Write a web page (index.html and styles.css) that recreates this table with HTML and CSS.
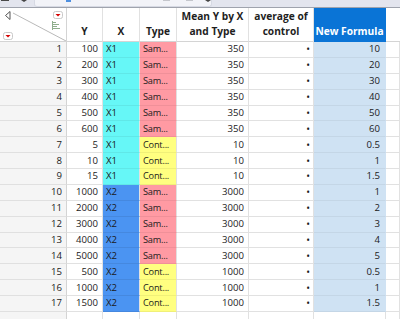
FILE: index.html
```html
<!DOCTYPE html>
<html>
<head>
<meta charset="utf-8">
<link rel="stylesheet" href="styles.css">
</head>
<body>
<div class="toolbar">
  <span class="tb-dash"></span>
  <span class="tb-caret"></span>
  <div class="tb-box">
    <span class="tb-blue"></span>
    <span class="tb-gray first"></span>
    <span class="tb-gray"></span>
    <span class="tb-caret tb-caret2"></span>
  </div>
</div>
<div class="table">
  <div class="row head">
    <div class="cell corner">
      <svg width="66" height="33" viewBox="0 0 66 33">
        <line x1="13" y1="5" x2="66" y2="33" stroke="#b9b9b9" stroke-width="1"/>
        <path d="M10 3.5 L5.5 7.5 L10 11.5 Z" fill="none" stroke="#555" stroke-width="1"/>
        <rect x="53.5" y="3.5" width="9" height="7" rx="2" fill="#fff" stroke="#c9c9c9"/>
        <path d="M55.5 6 L60.5 6 L58 8.5 Z" fill="#d40000"/>
        <rect x="3.5" y="24.5" width="9" height="7" rx="2" fill="#fff" stroke="#c9c9c9"/>
        <path d="M5.5 27 L10.5 27 L8 29.5 Z" fill="#d40000"/>
        <g stroke="#8fae8c" stroke-width="1">
          <line x1="52" y1="14.5" x2="56" y2="14.5"/>
          <line x1="52" y1="16.5" x2="59" y2="16.5"/>
          <line x1="52" y1="18.5" x2="57" y2="18.5"/>
          <line x1="52" y1="20.5" x2="60" y2="20.5"/>
        </g>
        <line x1="52.5" y1="13" x2="52.5" y2="22" stroke="#8fae8c"/>
      </svg>
    </div>
    <div class="cell h">Y</div>
    <div class="cell h">X</div>
    <div class="cell h">Type</div>
    <div class="cell h">Mean Y by X<br>and Type</div>
    <div class="cell h">average of<br>control</div>
    <div class="cell h nfh">New Formula</div>
    <div class="cell h blank"></div>
  </div>
</div>
<div class="table body">
  <div class="row"><div class="cell rn">1</div><div class="cell num">100</div><div class="cell x1">X1</div><div class="cell sam">Sam...</div><div class="cell num">350</div><div class="cell dot">•</div><div class="cell num nf">10</div><div class="cell"></div></div>
  <div class="row"><div class="cell rn">2</div><div class="cell num">200</div><div class="cell x1">X1</div><div class="cell sam">Sam...</div><div class="cell num">350</div><div class="cell dot">•</div><div class="cell num nf">20</div><div class="cell"></div></div>
  <div class="row"><div class="cell rn">3</div><div class="cell num">300</div><div class="cell x1">X1</div><div class="cell sam">Sam...</div><div class="cell num">350</div><div class="cell dot">•</div><div class="cell num nf">30</div><div class="cell"></div></div>
  <div class="row"><div class="cell rn">4</div><div class="cell num">400</div><div class="cell x1">X1</div><div class="cell sam">Sam...</div><div class="cell num">350</div><div class="cell dot">•</div><div class="cell num nf">40</div><div class="cell"></div></div>
  <div class="row"><div class="cell rn">5</div><div class="cell num">500</div><div class="cell x1">X1</div><div class="cell sam">Sam...</div><div class="cell num">350</div><div class="cell dot">•</div><div class="cell num nf">50</div><div class="cell"></div></div>
  <div class="row"><div class="cell rn">6</div><div class="cell num">600</div><div class="cell x1">X1</div><div class="cell sam">Sam...</div><div class="cell num">350</div><div class="cell dot">•</div><div class="cell num nf">60</div><div class="cell"></div></div>
  <div class="row"><div class="cell rn">7</div><div class="cell num">5</div><div class="cell x1">X1</div><div class="cell con">Cont...</div><div class="cell num">10</div><div class="cell dot">•</div><div class="cell num nf">0.5</div><div class="cell"></div></div>
  <div class="row"><div class="cell rn">8</div><div class="cell num">10</div><div class="cell x1">X1</div><div class="cell con">Cont...</div><div class="cell num">10</div><div class="cell dot">•</div><div class="cell num nf">1</div><div class="cell"></div></div>
  <div class="row"><div class="cell rn">9</div><div class="cell num">15</div><div class="cell x1">X1</div><div class="cell con">Cont...</div><div class="cell num">10</div><div class="cell dot">•</div><div class="cell num nf">1.5</div><div class="cell"></div></div>
  <div class="row"><div class="cell rn">10</div><div class="cell num">1000</div><div class="cell x2">X2</div><div class="cell sam">Sam...</div><div class="cell num">3000</div><div class="cell dot">•</div><div class="cell num nf">1</div><div class="cell"></div></div>
  <div class="row"><div class="cell rn">11</div><div class="cell num">2000</div><div class="cell x2">X2</div><div class="cell sam">Sam...</div><div class="cell num">3000</div><div class="cell dot">•</div><div class="cell num nf">2</div><div class="cell"></div></div>
  <div class="row"><div class="cell rn">12</div><div class="cell num">3000</div><div class="cell x2">X2</div><div class="cell sam">Sam...</div><div class="cell num">3000</div><div class="cell dot">•</div><div class="cell num nf">3</div><div class="cell"></div></div>
  <div class="row"><div class="cell rn">13</div><div class="cell num">4000</div><div class="cell x2">X2</div><div class="cell sam">Sam...</div><div class="cell num">3000</div><div class="cell dot">•</div><div class="cell num nf">4</div><div class="cell"></div></div>
  <div class="row"><div class="cell rn">14</div><div class="cell num">5000</div><div class="cell x2">X2</div><div class="cell sam">Sam...</div><div class="cell num">3000</div><div class="cell dot">•</div><div class="cell num nf">5</div><div class="cell"></div></div>
  <div class="row"><div class="cell rn">15</div><div class="cell num">500</div><div class="cell x2">X2</div><div class="cell con">Cont...</div><div class="cell num">1000</div><div class="cell dot">•</div><div class="cell num nf">0.5</div><div class="cell"></div></div>
  <div class="row"><div class="cell rn">16</div><div class="cell num">1000</div><div class="cell x2">X2</div><div class="cell con">Cont...</div><div class="cell num">1000</div><div class="cell dot">•</div><div class="cell num nf">1</div><div class="cell"></div></div>
  <div class="row"><div class="cell rn">17</div><div class="cell num">1500</div><div class="cell x2">X2</div><div class="cell con">Cont...</div><div class="cell num">1000</div><div class="cell dot">•</div><div class="cell num nf">1.5</div><div class="cell"></div></div>
  <div class="row"><div class="cell rn"></div><div class="cell"></div><div class="cell"></div><div class="cell"></div><div class="cell"></div><div class="cell"></div><div class="cell"></div><div class="cell"></div></div>
</div>
</body>
</html>
```

FILE: styles.css
```css
html, body {
  margin: 0;
  padding: 0;
  background: #ffffff;
  overflow: hidden;
}
body {
  width: 400px;
  height: 319px;
  font-family: "Open Sans", "Noto Sans", sans-serif;
  color: #1b1b1b;
}
.toolbar {
  height: 7px;
  background: #e3e5ee;
  border-bottom: 1px solid #9fa3ad;
  display: flex;
  align-items: flex-start;
  overflow: hidden;
}
.tb-dash {
  width: 8px;
  height: 1px;
  margin: 0 0 0 1px;
  background: #4a4a4a;
}
.tb-caret {
  width: 0;
  height: 0;
  border-left: 3px solid transparent;
  border-right: 3px solid transparent;
  border-top: 2px solid #444;
  margin-left: 12px;
}
.tb-box {
  margin-left: 7px;
  width: 176px;
  height: 6px;
  background: #f2f3f8;
  border: 1px solid #d6d9e3;
  border-top: none;
  border-radius: 0 0 3px 3px;
  display: flex;
  align-items: flex-start;
}
.tb-blue {
  width: 6px;
  height: 2px;
  background: #4d8fe0;
  margin-left: 31px;
}
.tb-gray {
  width: 8px;
  height: 1px;
  background: #c4c6cc;
  margin-left: 16px;
}
.tb-gray.first { margin-left: 92px; }
.tb-caret2 {
  margin-left: 12px;
}
.row {
  display: grid;
  grid-template-columns: 67px 36px 37px 37px 72px 65px 72px 14px;
  height: 15.875px;
}
.row.head {
  height: 34px;
}
.cell {
  box-sizing: border-box;
  border-right: 1px solid #e1e1e1;
  border-bottom: 1px solid #e1e1e1;
  font-size: 9.6px;
  line-height: 14px;
  display: flex;
  align-items: center;
  padding: 0 3px;
  white-space: nowrap;
  overflow: hidden;
}
.head .cell {
  border-bottom-color: #d4d4d4;
}
.cell.h {
  font-weight: 700;
  font-size: 10.2px;
  line-height: 15px;
  align-items: flex-end;
  justify-content: center;
  text-align: center;
  padding: 0 0 2px 0;
  color: #1e1e1e;
}
.cell.corner {
  padding: 0;
  align-items: flex-start;
  border-right-color: #d4d4d4;
}
.cell.corner svg {
  display: block;
}
.cell.nfh {
  background: #0a74d6;
  color: #ffffff;
  border-right-color: #0a74d6;
  border-bottom-color: #0a74d6;
}
.cell.blank {
  border-right: none;
}
.cell.rn {
  background: #f5f5f5;
  justify-content: flex-end;
  padding-right: 4px;
  border-right-color: #d4d4d4;
  border-bottom-color: #e0e0e0;
}
.cell.num {
  justify-content: flex-end;
  padding-right: 4px;
}
.cell.dot {
  justify-content: flex-end;
  padding-right: 3px;
  font-size: 10px;
}
.cell.nf {
  background: #cfe2f3;
  border-bottom-color: rgba(0, 0, 0, 0.05);
  border-right-color: #cfe2f3;
  padding-right: 5px;
}
.cell.x1 {
  background: #66f7f7;
  border-bottom-color: rgba(0, 0, 0, 0.06);
}
.cell.x2 {
  background: #4b94f2;
  border-bottom-color: rgba(0, 0, 0, 0.08);
}
.cell.sam, .cell.con {
  font-size: 9.2px;
  letter-spacing: -0.2px;
  border-bottom-color: rgba(0, 0, 0, 0.06);
}
.cell.sam {
  background: #ff9aa3;
}
.cell.con {
  background: #ffff80;
}
```
